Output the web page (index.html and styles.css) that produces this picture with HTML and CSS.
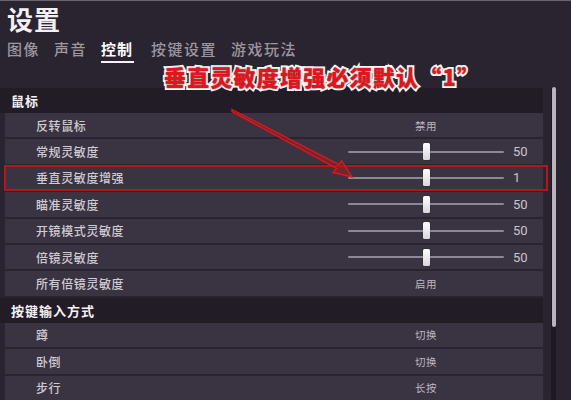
FILE: index.html
```html
<!DOCTYPE html>
<html lang="zh">
<head>
<meta charset="utf-8">
<link rel="stylesheet" href="styles.css">
</head>
<body>
<div class="page">
  <div class="topline"></div>
  <h1 class="title">设置</h1>
  <nav class="tabs">
    <span class="tab">图像</span>
    <span class="tab">声音</span>
    <span class="tab active">控制</span>
    <span class="tab">按键设置</span>
    <span class="tab">游戏玩法</span>
  </nav>
  <div class="content">
    <div class="list">
      <div class="section">鼠标</div>
      <div class="row"><span class="label">反转鼠标</span><span class="toggle">禁用</span></div>
      <div class="row"><span class="label">常规灵敏度</span><span class="slider"><span class="track"></span><span class="knob"></span></span><span class="num">50</span></div>
      <div class="row highlight"><span class="label">垂直灵敏度增强</span><span class="slider"><span class="track"></span><span class="knob"></span></span><span class="num">1</span></div>
      <div class="row"><span class="label">瞄准灵敏度</span><span class="slider"><span class="track"></span><span class="knob"></span></span><span class="num">50</span></div>
      <div class="row"><span class="label">开镜模式灵敏度</span><span class="slider"><span class="track"></span><span class="knob"></span></span><span class="num">50</span></div>
      <div class="row"><span class="label">倍镜灵敏度</span><span class="slider"><span class="track"></span><span class="knob"></span></span><span class="num">50</span></div>
      <div class="row"><span class="label">所有倍镜灵敏度</span><span class="toggle">启用</span></div>
      <div class="section">按键输入方式</div>
      <div class="row"><span class="label">蹲</span><span class="toggle">切换</span></div>
      <div class="row"><span class="label">卧倒</span><span class="toggle">切换</span></div>
      <div class="row"><span class="label">步行</span><span class="toggle">长按</span></div>
    </div>
    <div class="scroll"><div class="thumb"></div></div>
  </div>
  <div class="note">垂直灵敏度增强必须默认“1”</div>
  <svg class="arrow" width="571" height="400" viewBox="0 0 571 400">
    <polygon points="232,109.5 339,164.5 341.5,160.5 352,177 333,172.5 336.5,168.5 232,111.5" fill="rgba(190,20,24,0.45)" stroke="#e3141b" stroke-width="1.4" stroke-linejoin="miter"/>
  </svg>
</div>
</body>
</html>
```

FILE: styles.css
```css
* { box-sizing: border-box; }
html, body {
  margin: 0;
  padding: 0;
  background: #2a2430;
}
body {
  width: 571px;
  height: 400px;
  overflow: hidden;
  font-family: "Noto Sans CJK SC", "Noto Sans", sans-serif;
}
.page {
  position: relative;
  width: 571px;
  height: 400px;
  background: #2a2430;
}
.topline {
  height: 1px;
  background: #6a6470;
}
.title {
  margin: 0;
  height: 35px;
  padding-left: 7px;
  font-size: 26px;
  line-height: 35px;
  font-weight: 700;
  color: #f2f0f4;
  letter-spacing: 1px;
}
.tabs {
  display: flex;
  gap: 14px;
  height: 52px;
  padding-left: 7px;
  padding-top: 1px;
}
.tab {
  position: relative;
  font-size: 15px;
  line-height: 24px;
  height: 26px;
  color: #9c97a1;
  font-weight: 500;
  letter-spacing: 1.5px;
}
.tab.active {
  color: #ffffff;
  font-weight: 700;
  border-bottom: 2px solid #f4f2f6;
  margin-right: 3px;
  letter-spacing: 1px;
  padding-right: 1px;
}
.content {
  display: flex;
  height: 312px;
}
.list {
  width: 543px;
  display: flex;
  flex-direction: column;
  gap: 2px;
  padding-left: 5px;
}
.section {
  height: 25px;
  margin-left: -5px;
  margin-bottom: -2px;
  padding-left: 11px;
  background: #221c27;
  color: #f4f2f6;
  font-size: 13px;
  font-weight: 700;
  line-height: 25px;
  letter-spacing: 1px;
  flex: none;
}
.row {
  position: relative;
  flex: none;
  height: 24.4px;
  background: #3a3341;
  display: flex;
  align-items: center;
}
.label {
  width: 343px;
  padding-left: 31px;
  font-size: 12px;
  color: #cfcbd3;
  letter-spacing: 0.6px;
  font-weight: 500;
}
.toggle {
  width: 156px;
  text-align: center;
  font-size: 10.5px;
  color: #bdb8c2;
  letter-spacing: 0.5px;
}
.slider {
  position: relative;
  width: 156px;
  height: 18px;
  display: flex;
  align-items: center;
  justify-content: center;
}
.track {
  position: absolute;
  left: 0;
  right: 0;
  top: 8px;
  height: 2px;
  background: #8e8894;
  border-radius: 1px;
}
.knob {
  position: relative;
  width: 7px;
  height: 17px;
  background: linear-gradient(#ffffff, #d9d6dc);
  border-radius: 1.5px;
  box-shadow: 0 0 1px rgba(0,0,0,0.6);
}
.num {
  margin-left: 9px;
  font-family: Roboto, "Liberation Sans", sans-serif;
  font-size: 13px;
  color: #c9c5cd;
}
.highlight::after {
  content: "";
  position: absolute;
  left: -1px;
  right: -5px;
  top: -1px;
  bottom: -1px;
  border: 2px solid #b5161c;
}
.scroll {
  margin-left: 8px;
  width: 5px;
  margin-top: -1px;
  height: 313px;
  background: #1d1822;
  border-radius: 1px;
}
.thumb {
  width: 4px;
  height: 240px;
  margin-left: 0.5px;
  background: #b9b4bd;
  border-radius: 2px;
}
.note {
  position: absolute;
  left: 164px;
  top: 60px;
  font-size: 22px;
  font-weight: 900;
  color: #e2151c;
  -webkit-text-stroke: 4px #ffffff;
  paint-order: stroke fill;
  letter-spacing: 1.2px;
  line-height: 32px;
  text-shadow: 0 0 2px rgba(0,0,0,0.6);
}
.arrow {
  position: absolute;
  left: 0;
  top: 0;
  pointer-events: none;
}
```
